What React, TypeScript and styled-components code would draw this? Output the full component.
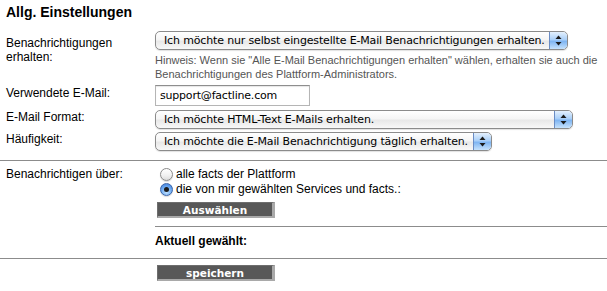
import styled, { createGlobalStyle } from 'styled-components';

const GlobalStyle = createGlobalStyle`
  html, body {
    margin: 0;
    padding: 0;
    background: #fff;
  }
  body {
    font-family: 'Liberation Sans', Arial, sans-serif;
    font-size: 12px;
    color: #000;
  }
`;

const Page = styled.div`
  width: 607px;
`;

const Title = styled.h2`
  margin: 0;
  padding: 4px 0 0 6px;
  height: 31px;
  box-sizing: border-box;
  font-size: 14px;
  line-height: 16px;
  font-weight: bold;
`;

const Row = styled.div<{ $mt?: number }>`
  display: grid;
  grid-template-columns: 155px 1fr;
  margin-top: ${(p) => p.$mt ?? 0}px;
`;

const Label = styled.div<{ $pt?: number }>`
  padding: ${(p) => p.$pt ?? 0}px 0 0 6px;
  line-height: 14px;
`;

const Field = styled.div`
  display: flex;
  flex-direction: column;
  align-items: flex-start;
  min-width: 0;
`;

const SelectBox = styled.div<{ $w: number }>`
  display: flex;
  width: ${(p) => p.$w}px;
  height: 19px;
  box-sizing: border-box;
  border: 1px solid #8b8b8b;
  border-radius: 5px;
  background: linear-gradient(#ffffff, #f5f5f5 45%, #e8e8e8 55%, #f8f8f8);
  box-shadow: 0 1px 1px rgba(0, 0, 0, 0.12);
  overflow: hidden;
`;

const SelectText = styled.span`
  flex: 1;
  padding-left: 8px;
  font-family: 'DejaVu Sans', sans-serif;
  font-size: 11px;
  letter-spacing: -0.15px;
  line-height: 17px;
  white-space: nowrap;
  overflow: hidden;
`;

const Stepper = styled.span`
  width: 17px;
  border-left: 1px solid #6a8cc4;
  border-radius: 0 4px 4px 0;
  background: linear-gradient(#e4f0fd, #a9cff8 45%, #7fb5f2 55%, #c6e2fc);
  display: flex;
  align-items: center;
  justify-content: center;
`;

const EmailInput = styled.input`
  width: 155px;
  height: 21px;
  box-sizing: border-box;
  margin: 0;
  padding: 0 0 0 4px;
  border: 1px solid #b5b5b5;
  border-top-color: #8e8e8e;
  box-shadow: inset 0 1px 1px rgba(0, 0, 0, 0.1);
  font-family: 'DejaVu Sans', sans-serif;
  font-size: 11px;
  letter-spacing: -0.2px;
  color: #000;
  outline: none;
`;

const Hint = styled.p`
  margin: 3px 0 0;
  font-size: 11px;
  line-height: 14px;
  color: #555;
  white-space: nowrap;
`;

const Rule = styled.div<{ $mt: number }>`
  margin-top: ${(p) => p.$mt}px;
  height: 1px;
  align-self: stretch;
  background: #8c8c8c;
`;

const RadioLine = styled.label`
  display: flex;
  align-items: center;
  height: 15px;
  line-height: 15px;
`;

const RadioDot = styled.span<{ $checked?: boolean }>`
  width: 13px;
  height: 13px;
  box-sizing: border-box;
  margin: 0 3px 0 5px;
  border-radius: 50%;
  display: flex;
  align-items: center;
  justify-content: center;
  border: 1px solid ${(p) => (p.$checked ? '#3a64a8' : '#8a8a8a')};
  background: ${(p) =>
    p.$checked
      ? 'radial-gradient(circle at 50% 75%, #bfe0ff, #6aa8f0 55%, #3b78d6)'
      : 'linear-gradient(#ffffff, #f0f0f0 60%, #dcdcdc)'};
  box-shadow: 0 1px 1px rgba(0, 0, 0, 0.15);

  &::after {
    content: '';
    display: ${(p) => (p.$checked ? 'block' : 'none')};
    width: 5px;
    height: 5px;
    border-radius: 50%;
    background: #1b1b1b;
  }
`;

const GreyButton = styled.button<{ $mt?: number }>`
  margin: ${(p) => p.$mt ?? 0}px 0 0 2px;
  width: 118px;
  height: 16px;
  box-sizing: border-box;
  padding: 0;
  border-style: solid;
  border-width: 1px 3px 2px 1px;
  border-color: #6e6e6e #a9a9a9 #a9a9a9 #6e6e6e;
  background: #585858;
  color: #fff;
  font-family: 'DejaVu Sans', sans-serif;
  font-weight: bold;
  font-size: 10.5px;
  line-height: 12px;
  text-align: center;
  cursor: pointer;
`;

const Strong = styled.div`
  margin-top: 7px;
  font-weight: bold;
  line-height: 14px;
`;

const Arrows = () => (
  <svg width="7" height="11" viewBox="0 0 7 11">
    <path d="M3.5 0.5 L6.5 4 L0.5 4 Z" fill="#1a1a1a" />
    <path d="M3.5 10.5 L6.5 7 L0.5 7 Z" fill="#1a1a1a" />
  </svg>
);

const Select = ({ width, text }: { width: number; text: string }) => (
  <SelectBox $w={width}>
    <SelectText>{text}</SelectText>
    <Stepper>
      <Arrows />
    </Stepper>
  </SelectBox>
);

export default function App() {
  return (
    <Page>
      <GlobalStyle />
      <Title>Allg. Einstellungen</Title>

      <Row>
        <Label $pt={5}>
          Benachrichtigungen
          <br />
          erhalten:
        </Label>
        <Field>
          <Select
            width={413}
            text="Ich möchte nur selbst eingestellte E-Mail Benachrichtigungen erhalten."
          />
          <Hint>
            Hinweis: Wenn sie "Alle E-Mail Benachrichtigungen erhalten" wählen, erhalten sie auch die
            <br />
            Benachrichtigungen des Plattform-Administrators.
          </Hint>
        </Field>
      </Row>

      <Row $mt={4}>
        <Label $pt={1}>Verwendete E-Mail:</Label>
        <Field>
          <EmailInput readOnly value="support@factline.com" />
        </Field>
      </Row>

      <Row $mt={4}>
        <Label>E-Mail Format:</Label>
        <Field>
          <Select width={418} text="Ich möchte HTML-Text E-Mails erhalten." />
        </Field>
      </Row>

      <Row $mt={3}>
        <Label>Häufigkeit:</Label>
        <Field>
          <Select width={337} text="Ich möchte die E-Mail Benachrichtigung täglich erhalten." />
        </Field>
      </Row>

      <Rule $mt={9} />

      <Row $mt={6}>
        <Label>Benachrichtigen über:</Label>
        <Field>
          <RadioLine>
            <RadioDot />
            alle facts der Plattform
          </RadioLine>
          <RadioLine>
            <RadioDot $checked />
            die von mir gewählten Services und facts.:
          </RadioLine>
          <GreyButton $mt={5}>Auswählen</GreyButton>
          <Rule $mt={8} />
          <Strong>Aktuell gewählt:</Strong>
        </Field>
      </Row>

      <Rule $mt={10} />

      <Row $mt={6}>
        <div />
        <Field>
          <GreyButton>speichern</GreyButton>
        </Field>
      </Row>
    </Page>
  );
}
